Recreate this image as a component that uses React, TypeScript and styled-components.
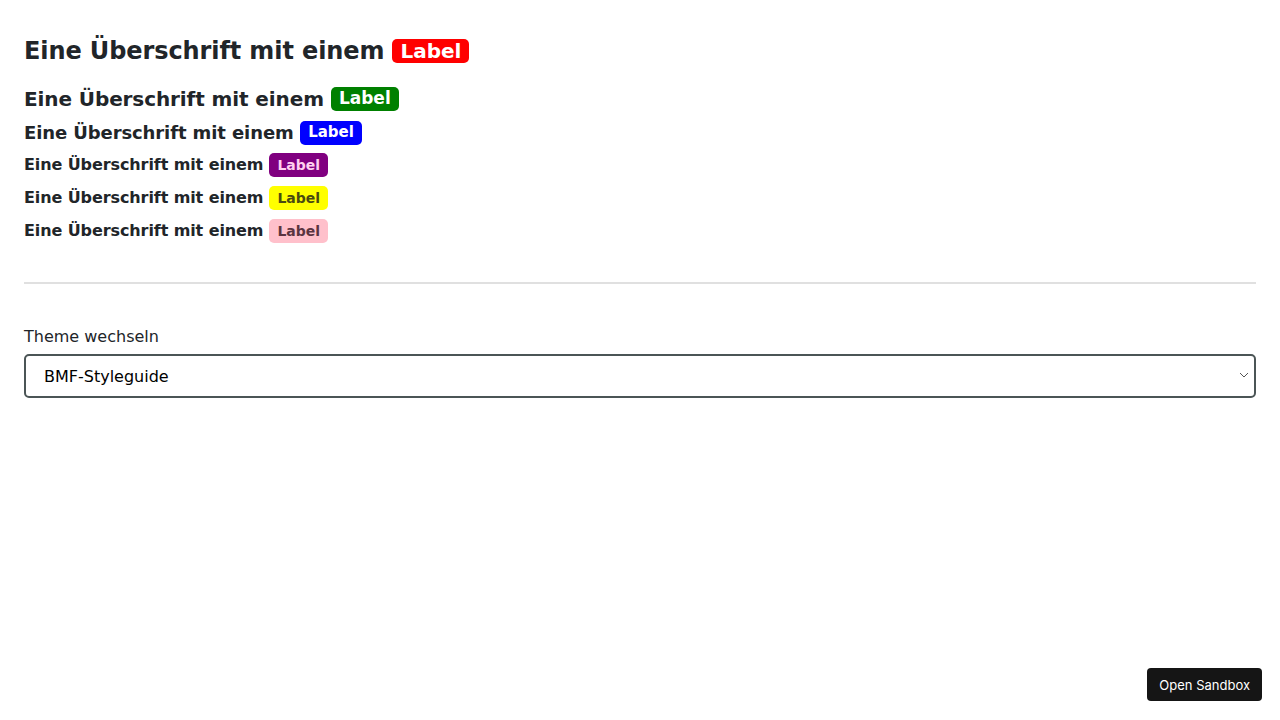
import React from "react";
import styled, { createGlobalStyle } from "styled-components";

const GlobalStyle = createGlobalStyle`
  body {
    margin: 0;
    background: #fff;
    font-family: "DejaVu Sans", Verdana, sans-serif;
    color: #212529;
  }
`;

const Page = styled.div`
  padding: 24px;
  min-height: 720px;
  box-sizing: border-box;
`;

const Headings = styled.div`
  display: flex;
  flex-direction: column;
  align-items: flex-start;
`;

interface HeadingProps {
  $size: number;
  $gap: number;
}

const Heading = styled.div<HeadingProps>`
  font-size: ${(p) => p.$size}px;
  font-weight: bold;
  line-height: 1.5;
  letter-spacing: -0.1px;
  margin-top: ${(p) => p.$gap}px;
  display: flex;
  align-items: center;
  gap: calc(0.25em + 2px);
`;

interface BadgeProps {
  $bg: string;
  $fg: string;
  $size: number;
}

const Badge = styled.span<BadgeProps>`
  display: inline-flex;
  align-items: center;
  height: 24px;
  padding: 0 8px;
  border-radius: 5px;
  background: ${(p) => p.$bg};
  color: ${(p) => p.$fg};
  font-size: ${(p) => p.$size}px;
  font-weight: bold;
  letter-spacing: 0;
`;

const Divider = styled.hr`
  border: 0;
  border-top: 2px solid #e0e0e0;
  margin: 39px 0 0;
`;

const Field = styled.div`
  margin-top: 41px;
  display: flex;
  flex-direction: column;
  gap: 5px;
`;

const FieldLabel = styled.label`
  font-size: 16px;
  line-height: 24px;
`;

const SelectWrap = styled.div`
  position: relative;
`;

const Select = styled.select`
  appearance: none;
  width: 100%;
  height: 44px;
  box-sizing: border-box;
  border: 2px solid #4b5556;
  border-radius: 5px;
  background: #fff;
  padding: 0 18px;
  font-family: "DejaVu Sans", Verdana, sans-serif;
  font-size: 16px;
  color: #000;
`;

const Chevron = styled.svg`
  position: absolute;
  right: 7px;
  top: 18px;
  pointer-events: none;
`;

const SandboxButton = styled.button`
  position: fixed;
  right: 18px;
  bottom: 19px;
  height: 33px;
  padding: 0 12px;
  border: 0;
  border-radius: 4px;
  background: #151515;
  color: #fff;
  font-family: Inter, "Liberation Sans", sans-serif;
  font-size: 13px;
`;

const rows = [
  { size: 24, gap: 9, bg: "red", fg: "#fff", label: 20 },
  { size: 20, gap: 15, bg: "green", fg: "#fff", label: 17 },
  { size: 18, gap: 5, bg: "blue", fg: "#fff", label: 15 },
  { size: 16, gap: 7, bg: "purple", fg: "#ffd0f0", label: 14 },
  { size: 16, gap: 9, bg: "yellow", fg: "#4a4a10", label: 14 },
  { size: 16, gap: 9, bg: "pink", fg: "#5a3440", label: 14 },
];

export default function App() {
  return (
    <>
      <GlobalStyle />
      <Page>
        <Headings>
          {rows.map((r, i) => (
            <Heading key={i} $size={r.size} $gap={r.gap}>
              Eine Überschrift mit einem
              <Badge $bg={r.bg} $fg={r.fg} $size={r.label}>
                Label
              </Badge>
            </Heading>
          ))}
        </Headings>
        <Divider />
        <Field>
          <FieldLabel>Theme wechseln</FieldLabel>
          <SelectWrap>
            <Select defaultValue="bmf">
              <option value="bmf">BMF-Styleguide</option>
            </Select>
            <Chevron width="10" height="6" viewBox="0 0 10 6">
              <path d="M1 1l4 4 4-4" fill="none" stroke="#555" strokeWidth="1" />
            </Chevron>
          </SelectWrap>
        </Field>
        <SandboxButton>Open Sandbox</SandboxButton>
      </Page>
    </>
  );
}
